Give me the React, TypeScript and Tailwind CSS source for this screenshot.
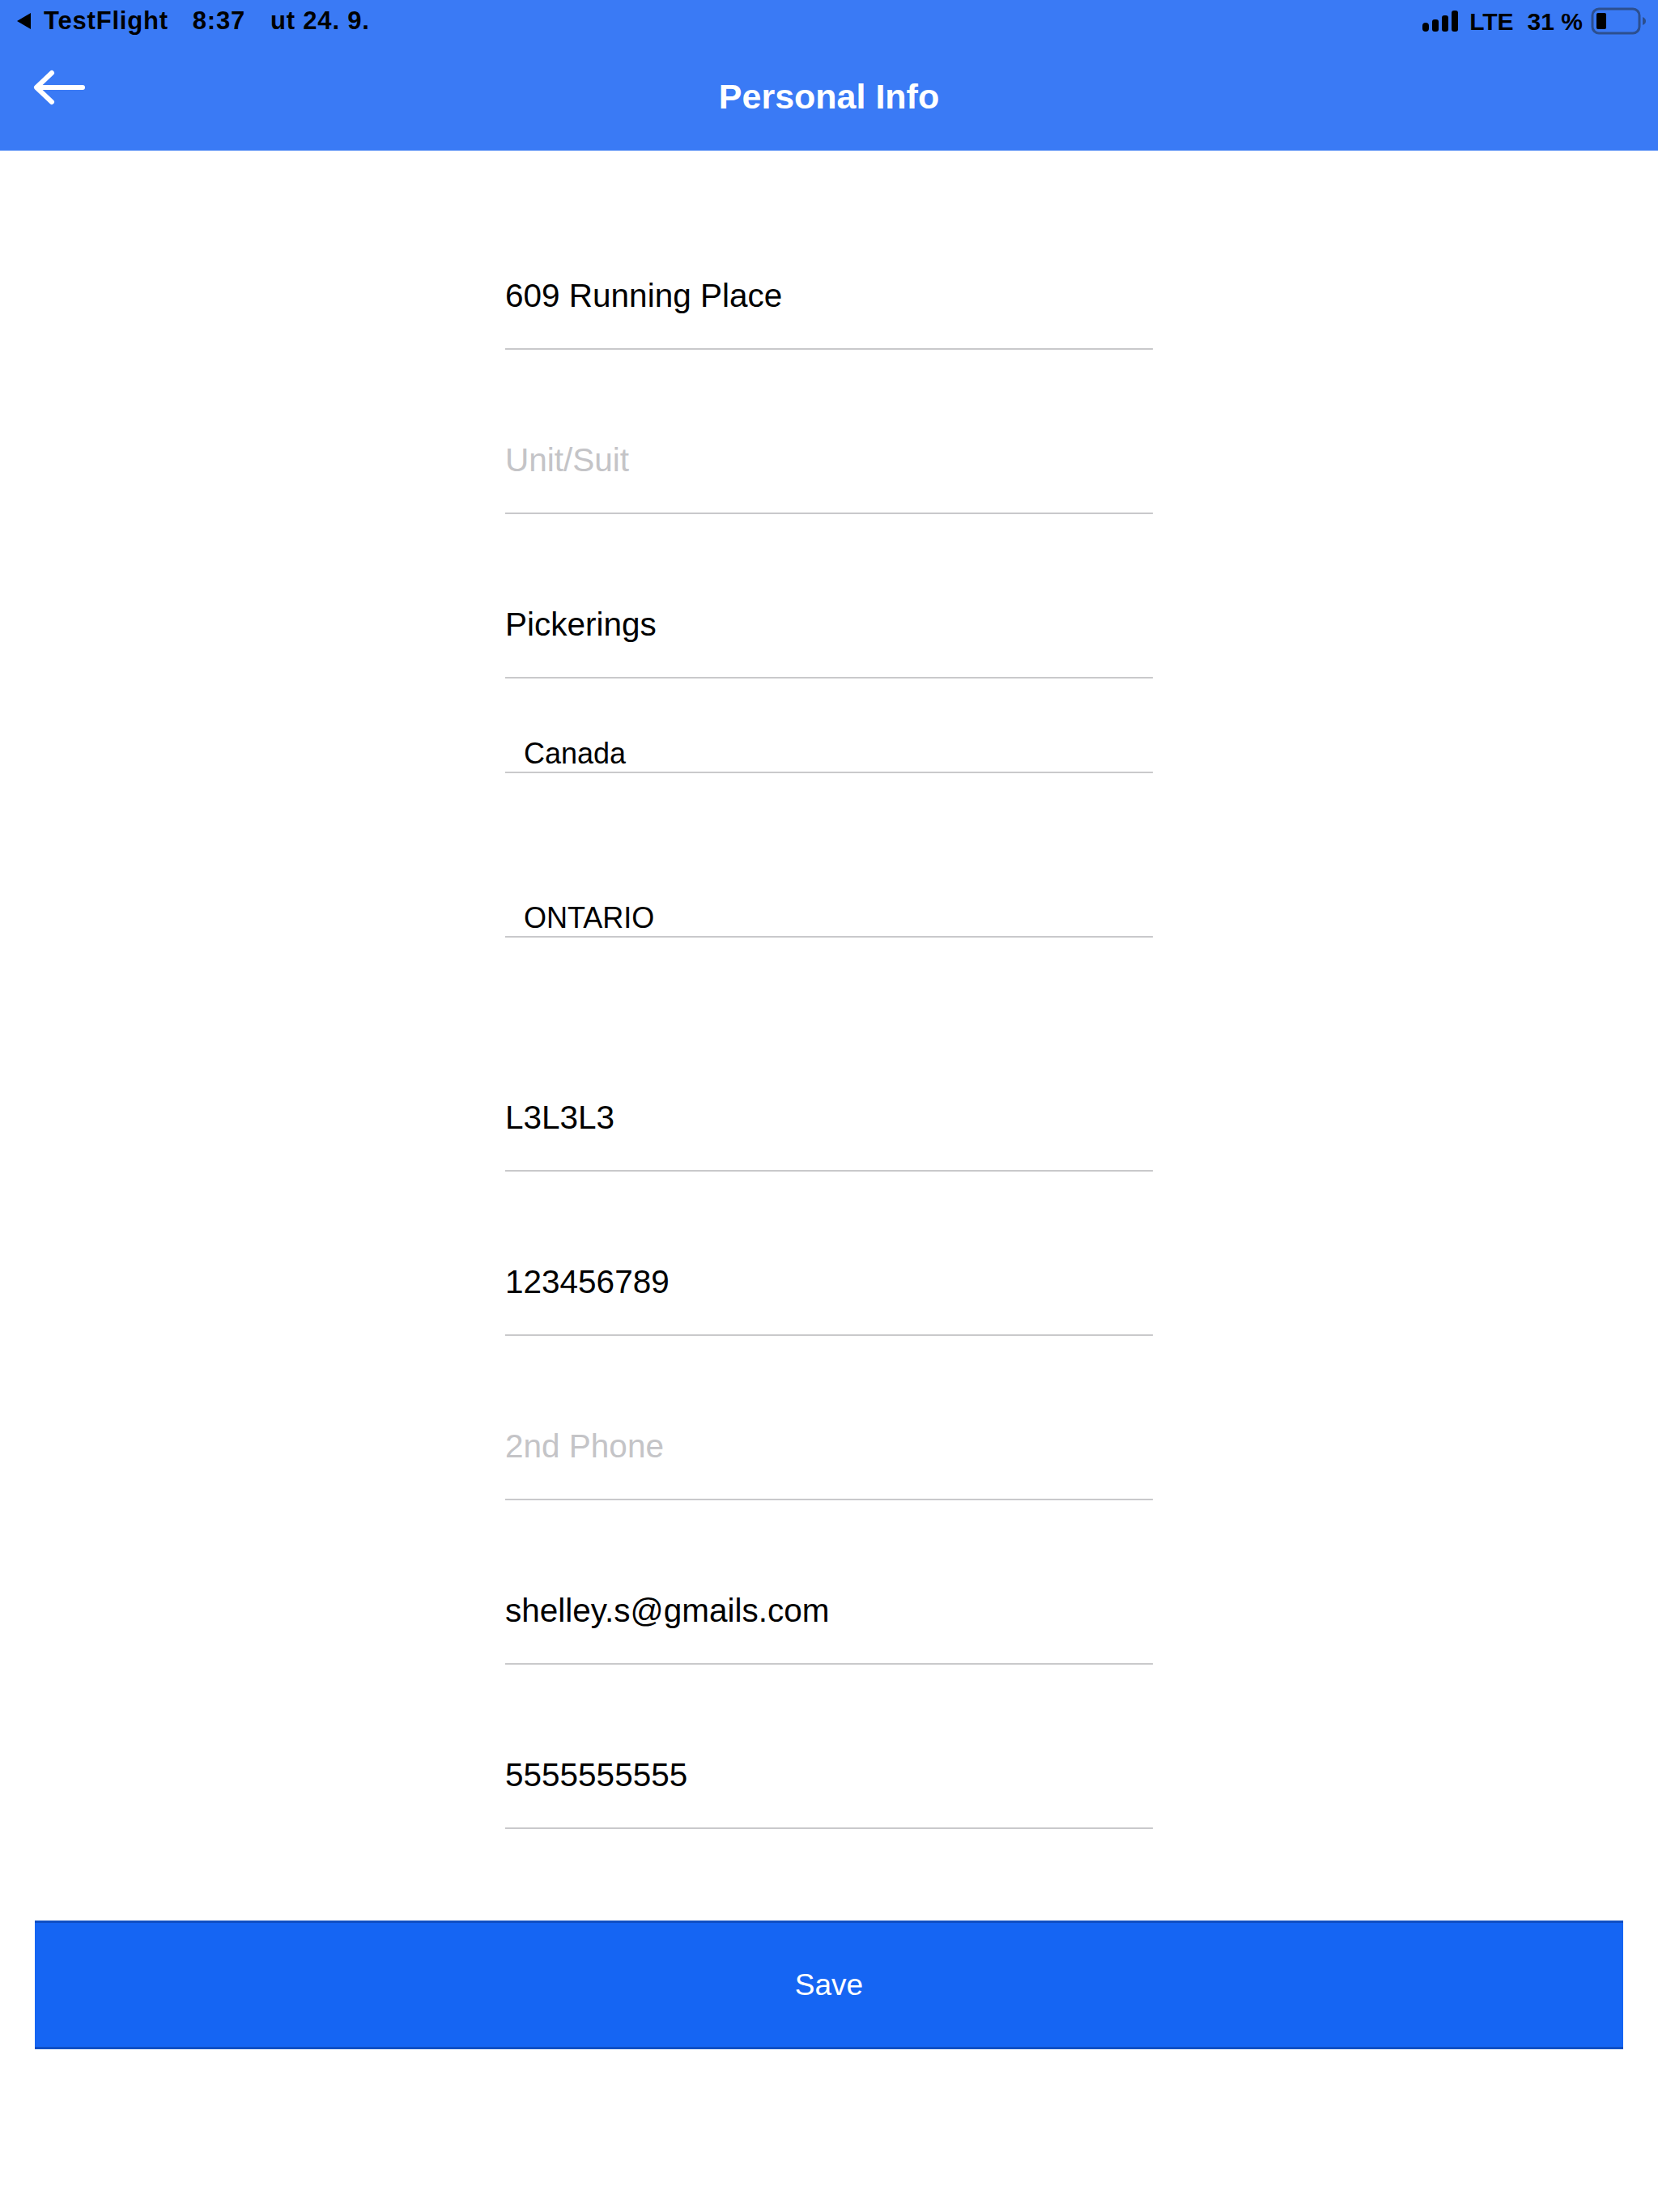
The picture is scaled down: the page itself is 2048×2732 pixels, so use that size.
const font = { fontFamily: '"Liberation Sans", Arial, sans-serif' };

const StatusBar = () => (
  <div className="flex h-[52px] items-center justify-between pl-[21px] pr-[13px] text-[31px] font-bold text-black">
    <div className="flex items-center tracking-[0.8px]">
      <svg width="17" height="20" viewBox="0 0 17 20" className="mr-[16px]">
        <polygon points="17,0 17,20 0,10" fill="#000" />
      </svg>
      <span>TestFlight</span>
      <span className="ml-[30px]">8:37</span>
      <span className="ml-[31px]">ut 24. 9.</span>
    </div>
    <div className="flex items-center">
      <svg width="44" height="26" viewBox="0 0 44 26">
        <rect x="0" y="15" width="8" height="11" rx="4" fill="#000" />
        <rect x="12" y="11" width="8" height="15" rx="3" fill="#000" />
        <rect x="24" y="6" width="8" height="20" rx="3" fill="#000" />
        <rect x="36" y="0" width="8" height="26" rx="3" fill="#000" />
      </svg>
      <span className="ml-[14px] text-[30px]">LTE</span>
      <span className="ml-[17px] text-[30px]">31 %</span>
      <svg width="70" height="34" viewBox="0 0 70 34" className="ml-[10px]">
        <rect x="2" y="2" width="58" height="30" rx="8" fill="none" stroke="#2c4f8f" strokeWidth="3" />
        <rect x="7" y="7" width="12" height="20" rx="2" fill="#000" />
        <path d="M64 12c3 1 4 3 4 5s-1 4-4 5z" fill="#2c4f8f" />
      </svg>
    </div>
  </div>
);

const TextField = ({ value, placeholder }: { value?: string; placeholder?: string }) => (
  <div className="flex h-[132px] items-center border-b-2 border-[#c9c9cb] text-[40.5px]">
    {value ? (
      <span className="text-black">{value}</span>
    ) : (
      <span className="text-[#c4c4c7]">{placeholder}</span>
    )}
  </div>
);

const PickerField = ({ value }: { value: string }) => (
  <div className="mb-[86px] flex h-[46px] items-center border-b-2 border-[#c9c9cb] pl-[23px] text-[36px] text-black">
    {value}
  </div>
);

export default function App() {
  return (
    <div className="min-h-[2732px] w-full bg-white" style={font}>
      {/* Header */}
      <div className="h-[186px] bg-[#3a7af5]">
        <StatusBar />
        <div className="relative flex h-[134px] items-center justify-center">
          <svg
            width="66"
            height="46"
            viewBox="0 0 66 46"
            className="absolute left-[40px] top-[33px]"
            fill="none"
            stroke="#fff"
            strokeWidth="6"
            strokeLinecap="round"
            strokeLinejoin="round"
          >
            <path d="M62 23H6" />
            <path d="M24 5L5 23l19 18" />
          </svg>
          <span className="text-[43px] font-bold text-white">Personal Info</span>
        </div>
      </div>

      {/* Form */}
      <div className="mx-auto flex w-[800px] flex-col gap-[71px] pt-[114px]">
        <TextField value="609 Running Place" />
        <TextField placeholder="Unit/Suit" />
        <TextField value="Pickerings" />
        <PickerField value="Canada" />
        <PickerField value="ONTARIO" />
        <TextField value="L3L3L3" />
        <TextField value="123456789" />
        <TextField placeholder="2nd Phone" />
        <TextField value="shelley.s@gmails.com" />
        <TextField value="5555555555" />
      </div>

      {/* Save */}
      <div className="mx-[43px] mt-[113px]">
        <button className="flex h-[159px] w-full items-center justify-center border-y-[3px] border-[#0f4fc4] bg-[#1565f3] text-[37px] text-white">
          Save
        </button>
      </div>
    </div>
  );
}
